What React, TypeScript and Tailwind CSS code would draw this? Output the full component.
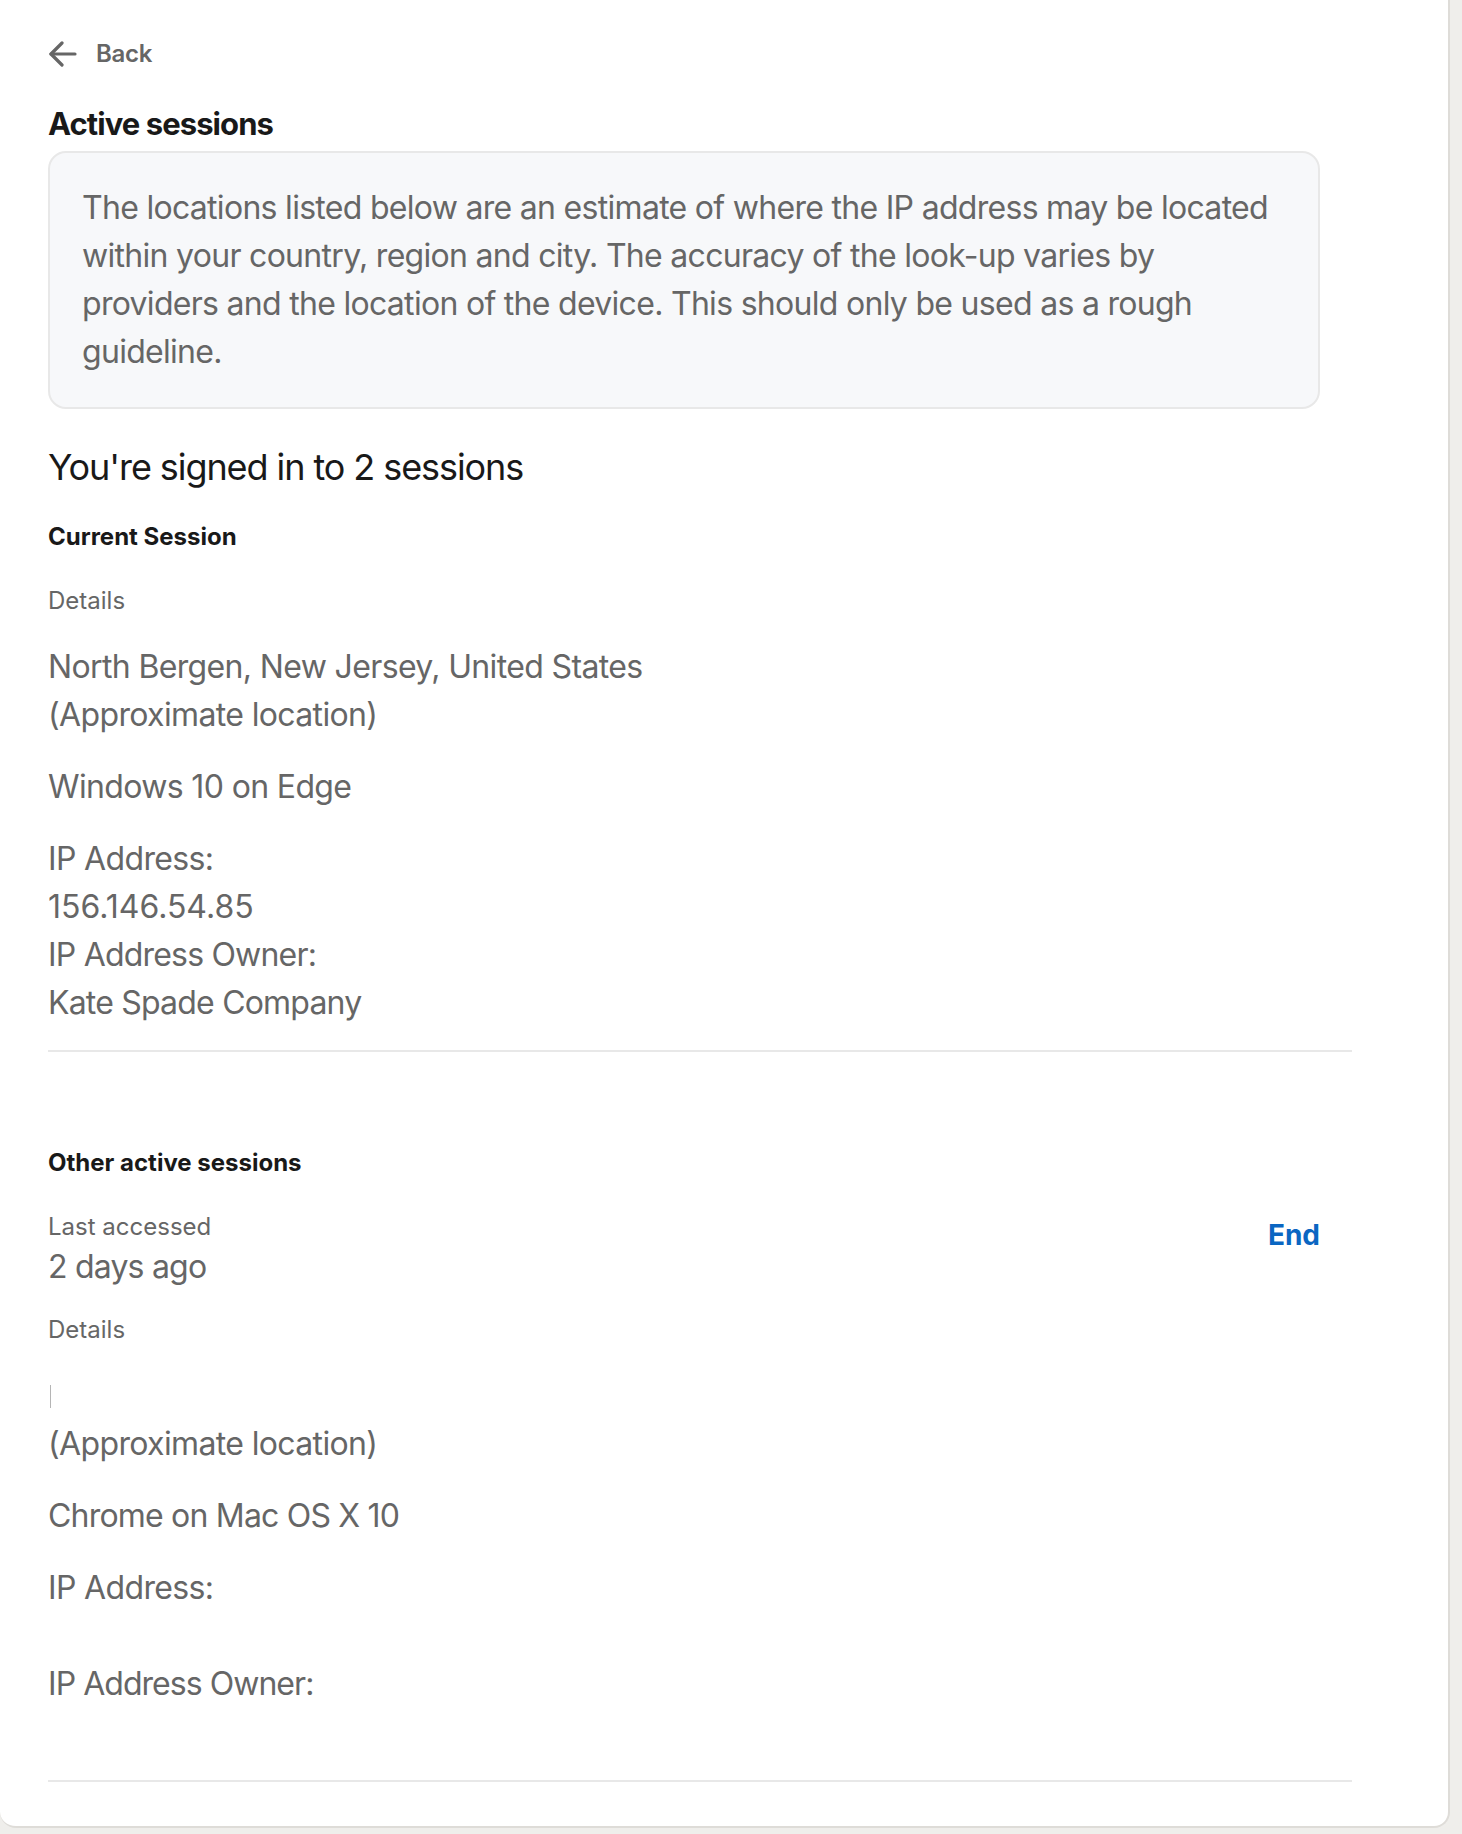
import React from 'react';

function BackArrow() {
  return (
    <svg width="29" height="26" viewBox="0 0 29 26" fill="none" stroke="#666666" strokeWidth="3.2" strokeLinecap="round" strokeLinejoin="round">
      <path d="M27 13H3" />
      <path d="M14 2L3 13L14 24" />
    </svg>
  );
}

export default function App() {
  return (
    <div className="min-h-screen bg-[#efeeeb] text-[#191919] font-['Inter','Liberation_Sans',sans-serif]">
      <div className="w-[1450px] bg-white border-r-2 border-b-2 border-[#dedcd8] rounded-b-[16px] pl-12 pt-9 pb-11">
        <div className="w-[1304px]">
          {/* back */}
          <div className="flex items-center h-9">
            <BackArrow />
            <span className="ml-[19px] text-[24px] leading-9 font-semibold text-[#666666] tracking-[-0.01em]">Back</span>
          </div>

          <h1 className="mt-[32px] text-[31px] leading-10 font-bold tracking-[-0.03em]">Active sessions</h1>

          <div className="mt-[7px] w-[1272px] bg-[#f7f8fa] border-2 border-[#e8e8e8] rounded-[18px] px-8 py-[31px]">
            <p className="text-[32px] leading-[48px] text-[#666666] tracking-[-0.022em]">
              The locations listed below are an estimate of where the IP address may be located within your country, region and city. The accuracy of the look-up varies by providers and the location of the device. This should only be used as a rough guideline.
            </p>
          </div>

          <h2 className="mt-9 text-[36px] leading-[44px] tracking-[-0.03em]">You're signed in to 2 sessions</h2>

          {/* current session */}
          <section className="pb-[23px] border-b-2 border-[#e8e8e8]">
            <h3 className="mt-8 text-[24px] leading-8 font-bold">Current Session</h3>
            <p className="mt-8 text-[24px] leading-8 text-[#666666]">Details</p>
            <div className="text-[32px] leading-[48px] text-[#666666] tracking-[-0.02em]">
              <p className="mt-[26px]">North Bergen, New Jersey, United States<br />(Approximate location)</p>
              <p className="mt-6">Windows 10 on Edge</p>
              <div className="mt-6">
                <p>IP Address:</p>
                <p className="tracking-normal">156.146.54.85</p>
                <p className="tracking-[-0.025em]">IP Address Owner:</p>
                <p className="tracking-[-0.025em]">Kate Spade Company</p>
              </div>
            </div>
          </section>

          {/* other sessions */}
          <section className="pt-[95px] pb-6 border-b-2 border-[#e8e8e8]">
            <h3 className="text-[24px] leading-8 font-bold">Other active sessions</h3>
            <div className="mt-8 flex items-start justify-between pr-8">
              <div>
                <p className="text-[24px] leading-8 text-[#666666]">Last accessed</p>
                <p className="text-[32px] leading-[48px] text-[#666666] tracking-[-0.025em]">2 days ago</p>
              </div>
              <button className="mt-[6px] text-[28px] leading-9 font-bold text-[#0a66c2]">End</button>
            </div>
            <p className="mt-[23px] text-[24px] leading-8 text-[#666666]">Details</p>
            <div className="text-[32px] leading-[48px] text-[#666666] tracking-[-0.02em]">
              <div className="mt-[26px]">
                <div className="h-12 flex items-center">
                  <span className="ml-[2px] w-px h-[23px] bg-[#b5b5b5]" />
                </div>
                <p>(Approximate location)</p>
              </div>
              <p className="mt-6 tracking-[-0.025em]">Chrome on Mac OS X 10</p>
              <div className="mt-6">
                <p>IP Address:</p>
                <p className="h-12"></p>
                <p className="tracking-[-0.03em]">IP Address Owner:</p>
                <p className="h-12"></p>
              </div>
            </div>
          </section>
        </div>
      </div>
    </div>
  );
}
